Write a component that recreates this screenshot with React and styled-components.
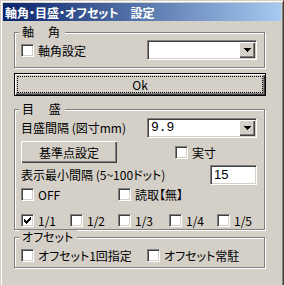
import React from "react";
import styled, { createGlobalStyle } from "styled-components";

const GlobalStyle = createGlobalStyle`
  body {
    margin: 0;
    background: #d4d0c8;
    overflow: hidden;
  }
`;

const Window = styled.div`
  width: 284px;
  height: 292px;
  box-sizing: border-box;
  border: 1px solid;
  border-color: #d4d0c8 #404040 #404040 #d4d0c8;
  box-shadow: inset 1px 1px 0 #fff, inset -1px -1px 0 #808080;
  padding: 2px;
  background: #d4d0c8;
  font-family: "Noto Sans CJK JP", "Liberation Sans", sans-serif;
  font-size: 12px;
  font-feature-settings: "palt";
  color: #000;
`;

const TitleBar = styled.div`
  height: 18px;
  display: flex;
  align-items: center;
  padding-left: 2px;
  background: linear-gradient(to right, #0a246a, #a6caf0);
  color: #fff;
  font-weight: bold;
  white-space: pre;
`;

const Client = styled.div`
  display: flex;
  flex-direction: column;
  padding: 11px 15px 0 11px;
`;

const Group = styled.div`
  position: relative;
  border: 1px solid #808080;
  box-shadow: inset 1px 1px 0 #fff, 1px 1px 0 #fff;
  margin-right: 1px;
  margin-top: ${({ $mt }) => $mt || 0}px;
  padding: ${({ $pad }) => $pad};
`;

const Legend = styled.span`
  position: absolute;
  top: -8px;
  left: 4px;
  padding: 0 4px 0 3px;
  line-height: 14px;
  background: #d4d0c8;
  white-space: pre;
  letter-spacing: ${({ $ls }) => $ls || 0}px;
`;

const Row = styled.div`
  display: flex;
  align-items: center;
  justify-content: ${({ $justify }) => $justify || "flex-start"};
  height: ${({ $h }) => $h}px;
  margin-top: ${({ $mt }) => $mt || 0}px;
`;

const GridRow = styled.div`
  display: grid;
  grid-template-columns: 49px 48px 51px 48px 1fr;
  align-items: center;
  height: 13px;
  margin-top: ${({ $mt }) => $mt || 0}px;
`;

const Text = styled.span`
  white-space: pre;
  line-height: 14px;
`;

const CheckLabel = styled.label`
  display: flex;
  align-items: center;
  height: 13px;
  white-space: pre;
  width: ${({ $w }) => ($w ? `${$w}px` : "auto")};
  margin-left: ${({ $ml }) => $ml || 0}px;
  grid-column: ${({ $col }) => $col || "auto"};
`;

const Box = styled.span`
  width: 13px;
  height: 13px;
  box-sizing: border-box;
  flex-shrink: 0;
  border: 1px solid;
  border-color: #808080 #fff #fff #808080;
  box-shadow: inset 1px 1px 0 #404040, inset -1px -1px 0 #d4d0c8;
  background: #fff;
  display: flex;
  align-items: center;
  justify-content: center;
`;

const CheckText = styled.span`
  margin-left: 4px;
  line-height: 13px;
`;

const Sunken = styled.div`
  box-sizing: border-box;
  width: ${({ $w }) => $w}px;
  height: 20px;
  border: 1px solid;
  border-color: #808080 #fff #fff #808080;
  box-shadow: inset 1px 1px 0 #404040, inset -1px -1px 0 #d4d0c8;
  background: #fff;
  padding: 1px;
  display: flex;
  align-items: center;
`;

const FieldValue = styled.span`
  flex: 1;
  padding-left: 2px;
  font-family: ${({ $mono }) =>
    $mono ? '"Liberation Mono", monospace' : '"Liberation Sans", sans-serif'};
  font-size: 13px;
  line-height: 16px;
`;

const DropButton = styled.span`
  width: 16px;
  height: 16px;
  box-sizing: border-box;
  background: #d4d0c8;
  box-shadow: inset 1px 1px 0 #fff, inset -1px -1px 0 #404040,
    inset -2px -2px 0 #808080;
  display: flex;
  align-items: center;
  justify-content: center;
`;

const Button = styled.div`
  position: relative;
  box-sizing: border-box;
  width: ${({ $w }) => ($w ? `${$w}px` : "auto")};
  height: ${({ $h }) => $h}px;
  margin-top: ${({ $mt }) => $mt || 0}px;
  border: ${({ $default }) => ($default ? "1px solid #000" : "none")};
  box-shadow: inset 1px 1px 0 #fff, inset -1px -1px 0 #404040,
    inset -2px -2px 0 #808080;
  display: flex;
  align-items: center;
  justify-content: center;
  white-space: pre;
`;

const FocusRect = styled.span`
  position: absolute;
  inset: 2px;
  border: 1px dotted #000;
`;

function CheckMark() {
  const cols = [2, 3, 4, 3, 2, 1, 0];
  return (
    <svg width="7" height="7" viewBox="0 0 7 7" shapeRendering="crispEdges">
      {cols.map((y, x) => (
        <rect key={x} x={x} y={y} width="1" height="3" fill="#000" />
      ))}
    </svg>
  );
}

function Arrow() {
  return (
    <svg width="7" height="4" viewBox="0 0 7 4" shapeRendering="crispEdges">
      <rect x="0" y="0" width="7" height="1" fill="#000" />
      <rect x="1" y="1" width="5" height="1" fill="#000" />
      <rect x="2" y="2" width="3" height="1" fill="#000" />
      <rect x="3" y="3" width="1" height="1" fill="#000" />
    </svg>
  );
}

function Check({ label, checked, ...rest }) {
  return (
    <CheckLabel {...rest}>
      <Box>{checked && <CheckMark />}</Box>
      <CheckText>{label}</CheckText>
    </CheckLabel>
  );
}

function Combo({ value }) {
  return (
    <Sunken $w={110}>
      <FieldValue $mono>{value}</FieldValue>
      <DropButton>
        <Arrow />
      </DropButton>
    </Sunken>
  );
}

export default function App() {
  const fractions = ["1/1", "1/2", "1/3", "1/4", "1/5"];

  return (
    <Window>
      <GlobalStyle />
      <TitleBar>軸角・目盛・オフセット　設定</TitleBar>
      <Client>
        <Group $pad="7px 7px 7px 6px">
          <Legend $ls={1}>軸　角</Legend>
          <Row $h={20} $justify="space-between">
            <Check label="軸角設定" />
            <Combo value="" />
          </Row>
        </Group>

        <Button $default $h={23} $mt={5}>
          <FocusRect />
          Ok
        </Button>

        <Group $mt={13} $pad="8px 7px 2px 6px">
          <Legend>目　 盛</Legend>
          <Row $h={20} $justify="space-between">
            <Text>目盛間隔 (図寸mm)</Text>
            <Combo value="9.9" />
          </Row>
          <Row $h={22} $mt={3}>
            <Button $w={96} $h={22}>基準点設定</Button>
            <Check label="実寸" $ml={58} />
          </Row>
          <Row $h={20} $mt={2} $justify="space-between">
            <Text>表示最小間隔 (5~100ドット)</Text>
            <Sunken $w={47}>
              <FieldValue>15</FieldValue>
            </Sunken>
          </Row>
          <GridRow $mt={3}>
            <Check label="OFF" $col="1 / 3" />
            <Check label="読取【無】" $col="3 / 6" />
          </GridRow>
          <GridRow $mt={13}>
            {fractions.map((f, i) => (
              <Check key={f} label={f} checked={i === 0} />
            ))}
          </GridRow>
        </Group>

        <Group $mt={7} $pad="11px 7px 5px 6px">
          <Legend>オフセット</Legend>
          <Row $h={13}>
            <Check label="オフセット1回指定" $w={126} />
            <Check label="オフセット常駐" />
          </Row>
        </Group>
      </Client>
    </Window>
  );
}
